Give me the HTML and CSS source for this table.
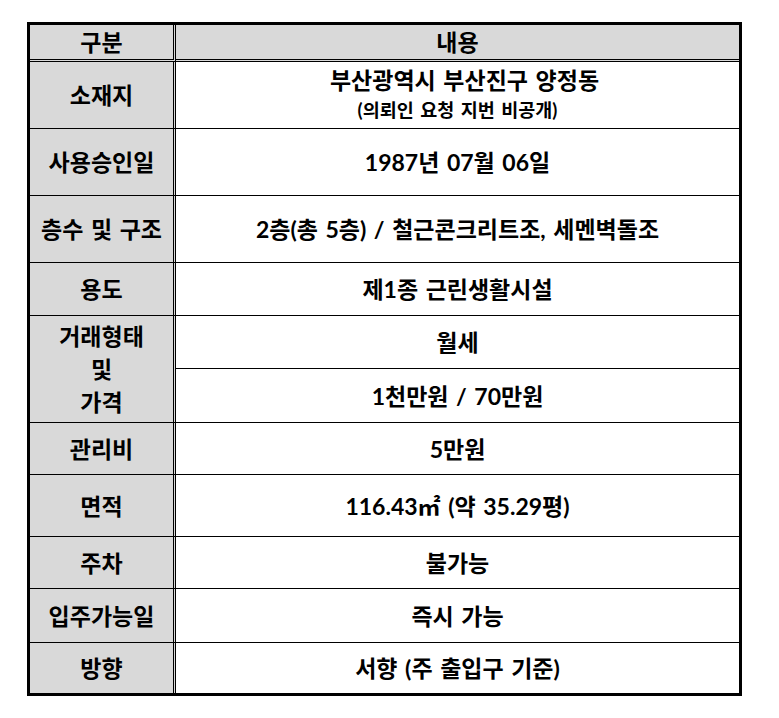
FILE: index.html
```html
<!DOCTYPE html>
<html lang="ko">
<head>
<meta charset="utf-8">
<link rel="stylesheet" href="styles.css">
</head>
<body>
<table class="info">
  <tr class="r-head">
    <th class="label head">구분</th>
    <th class="value head">내용</th>
  </tr>
  <tr class="r-67">
    <td class="label">소재지</td>
    <td class="value"><div class="addr">부산광역시 부산진구 양정동</div><div class="sub">(의뢰인 요청 지번 비공개)</div></td>
  </tr>
  <tr class="r-67">
    <td class="label">사용승인일</td>
    <td class="value">1987년 07월 06일</td>
  </tr>
  <tr class="r-67">
    <td class="label">층수 및 구조</td>
    <td class="value">2층(총 5층) / 철근콘크리트조, 세멘벽돌조</td>
  </tr>
  <tr class="r-53">
    <td class="label">용도</td>
    <td class="value">제1종 근린생활시설</td>
  </tr>
  <tr class="r-53">
    <td class="label multi" rowspan="2">거래형태<br>및<br>가격</td>
    <td class="value">월세</td>
  </tr>
  <tr class="r-54">
    <td class="value">1천만원 / 70만원</td>
  </tr>
  <tr class="r-52">
    <td class="label">관리비</td>
    <td class="value">5만원</td>
  </tr>
  <tr class="r-62">
    <td class="label">면적</td>
    <td class="value">116.43㎡ (약 35.29평)</td>
  </tr>
  <tr class="r-52">
    <td class="label">주차</td>
    <td class="value">불가능</td>
  </tr>
  <tr class="r-54">
    <td class="label">입주가능일</td>
    <td class="value">즉시 가능</td>
  </tr>
  <tr class="r-50 last">
    <td class="label">방향</td>
    <td class="value">서향 (주 출입구 기준)</td>
  </tr>
</table>
</body>
</html>
```

FILE: styles.css
```css
html, body {
  background: #ffffff;
}
body {
  margin: 22px 0 0 27px;
  font-family: "Lato", "Noto Sans CJK KR", "Noto Sans", sans-serif;
  color: #000000;
}
.info {
  border-collapse: separate;
  border-spacing: 0;
  border: 3px solid #000000;
  width: 715px;
}
.info th,
.info td {
  box-sizing: border-box;
  padding: 0;
  text-align: center;
  vertical-align: middle;
  font-weight: 700;
  font-size: 23px;
  line-height: 28px;
  word-spacing: 2px;
  border-bottom: 1px solid #000000;
}
.info .label {
  width: 146px;
  background: #d9d9d9;
  border-right: 3px double #000000;
}
.info .head {
  background: #d9d9d9;
  border-bottom: 3px double #000000;
}
.info .last td {
  border-bottom: 0;
}
.info .multi {
  line-height: 33px;
}
.r-head { height: 37px; }
.r-67 { height: 67px; }
.r-62 { height: 62px; }
.r-54 { height: 54px; }
.r-53 { height: 53px; }
.r-52 { height: 52px; }
.r-50 { height: 50px; }
.addr {
  line-height: 30px;
  padding-left: 14px;
}
.sub {
  font-size: 18.5px;
  line-height: 30px;
}
```
